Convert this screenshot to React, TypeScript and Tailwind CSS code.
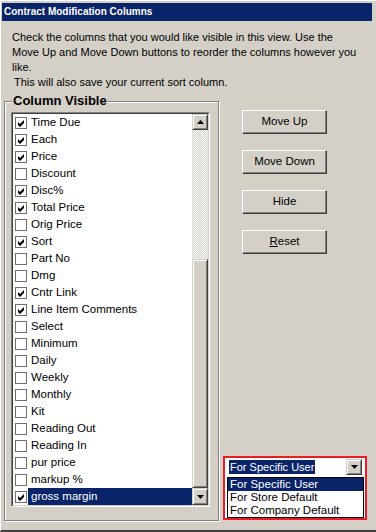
import React from "react";

const items: [string, boolean][] = [
  ["Time Due", true],
  ["Each", true],
  ["Price", true],
  ["Discount", false],
  ["Disc%", true],
  ["Total Price", true],
  ["Orig Price", false],
  ["Sort", true],
  ["Part No", false],
  ["Dmg", false],
  ["Cntr Link", true],
  ["Line Item Comments", true],
  ["Select", false],
  ["Minimum", false],
  ["Daily", false],
  ["Weekly", false],
  ["Monthly", false],
  ["Kit", false],
  ["Reading Out", false],
  ["Reading In", false],
  ["pur price", false],
  ["markup %", false],
  ["gross margin", true],
];

function Check() {
  return (
    <svg width="7" height="7" viewBox="0 0 7 7" className="block">
      <polygon points="0,2 2,4 6,0 6,3 2,7 0,5" fill="#000" />
    </svg>
  );
}

function Arrow({ down }: { down?: boolean }) {
  return (
    <svg width="7" height="4" viewBox="0 0 7 4" className="block">
      {down ? (
        <polygon points="0,0 7,0 3.5,4" fill="#000" />
      ) : (
        <polygon points="0,4 7,4 3.5,0" fill="#000" />
      )}
    </svg>
  );
}

function ScrollBtn({ down, h }: { down?: boolean; h: string }) {
  return (
    <div
      className={`${h} w-[16px] flex items-center justify-center bg-[#d4d0c8] border border-t-[#d4d0c8] border-l-[#d4d0c8] border-r-[#404040] border-b-[#404040] shadow-[inset_1px_1px_0_#ffffff,inset_-1px_-1px_0_#808080]`}
    >
      <Arrow down={down} />
    </div>
  );
}

function PushButton({ children }: { children: React.ReactNode }) {
  return (
    <div className="ml-[23px] w-[85px] h-[24px] flex items-center justify-center bg-[#d4d0c8] border border-t-white border-l-white border-r-[#404040] border-b-[#404040] shadow-[inset_-1px_-1px_0_#808080] text-[11.5px]">
      {children}
    </div>
  );
}

export default function App() {
  return (
    <div className="w-[376px] h-[532px] bg-[#d4d0c8] border-t border-l border-t-white border-l-white border-b-2 border-b-[#404040] font-['Liberation_Sans',Arial,sans-serif] text-[11px] text-black flex flex-col overflow-hidden">
      <div className="pl-[1px] pt-[2px] flex flex-col flex-1">
        <div className="w-[370px] h-[18px] bg-[#0a246a] text-white font-bold text-[10px] leading-[18px] pl-[2px] whitespace-nowrap">
          Contract Modification Columns
        </div>
        <div className="mt-[9px] pl-[10px] text-[11px] leading-[15px] whitespace-nowrap">
          <div>Check the columns that you would like visible in this view. Use the</div>
          <div>Move Up and Move Down buttons to reorder the columns however you</div>
          <div>like.</div>
          <div className="pl-[2px]">This will also save your current sort column.</div>
        </div>
        <div className="mt-[11px] flex">
          <div className="ml-[2px] w-[215px] h-[420px] relative border border-[#808080] shadow-[1px_1px_0_#ffffff,inset_1px_1px_0_#ffffff] pl-[6px] pt-[10px]">
            <span className="absolute -top-[8px] left-[7px] px-[1px] bg-[#d4d0c8] font-bold text-[13px] leading-[14px]">
              Column Visible
            </span>
            <div className="w-[199px] h-[395px] border border-t-[#808080] border-l-[#808080] border-r-white border-b-white">
              <div className="w-full h-full border border-t-[#404040] border-l-[#404040] border-r-[#d4d0c8] border-b-[#d4d0c8] bg-white flex">
                <div className="flex-1 flex flex-col">
                  {items.map(([label, checked], i) => {
                    const sel = i === items.length - 1;
                    return (
                      <div key={label} className="h-[17px] flex items-center">
                        <div className="w-[15px] h-full flex items-center pl-[2px]">
                          <div className="w-[12px] h-[12px] border border-[#707070] bg-white flex items-end pl-[2px] pb-[1px]">
                            {checked && <Check />}
                          </div>
                        </div>
                        <div
                          className={`flex-1 h-full pl-[3px] leading-[17px] text-[11.5px] whitespace-nowrap ${sel ? "bg-[#0a246a] text-white" : ""}`}
                        >
                          {label}
                        </div>
                      </div>
                    );
                  })}
                </div>
                <div className="w-[16px] flex flex-col">
                  <ScrollBtn h="h-[16px]" />
                  <div className="h-[129px] bg-[repeating-conic-gradient(#d4d0c8_0_25%,#ffffff_0_50%)] bg-[length:2px_2px]" />
                  <div className="h-[229px] bg-[#d4d0c8] border border-t-[#d4d0c8] border-l-[#d4d0c8] border-r-[#404040] border-b-[#404040] shadow-[inset_1px_1px_0_#ffffff,inset_-1px_-1px_0_#808080]" />
                  <ScrollBtn down h="h-[17px]" />
                </div>
              </div>
            </div>
          </div>
          <div className="flex-1 flex flex-col">
            <div className="mt-[9px] flex flex-col gap-[16px]">
              <PushButton>Move Up</PushButton>
              <PushButton>Move Down</PushButton>
              <PushButton>Hide</PushButton>
              <PushButton>
                <span>
                  <span className="underline">R</span>eset
                </span>
              </PushButton>
            </div>
            <div className="mt-auto mb-[1px] ml-[4px] w-[144px] h-[64px] border-2 border-[#ed1c24] bg-white flex flex-col">
              <div className="h-[19px] flex items-start">
                <div className="ml-[4px] mt-[2px] h-[14px] px-[1px] bg-[#0a246a] text-white text-[11px] leading-[14px] whitespace-nowrap">
                  For Specific User
                </div>
                <div className="ml-auto mr-[3px] mt-[1px]">
                  <ScrollBtn down h="h-[16px]" />
                </div>
              </div>
              <div className="ml-[2px] w-[137px] border border-black flex flex-col text-[11.5px] whitespace-nowrap">
                <div className="h-[13px] leading-[13px] pl-[2px] bg-[#0a246a] text-white">For Specific User</div>
                <div className="h-[13px] leading-[13px] pl-[2px]">For Store Default</div>
                <div className="h-[13px] leading-[13px] pl-[2px]">For Company Default</div>
              </div>
            </div>
          </div>
        </div>
      </div>
    </div>
  );
}
